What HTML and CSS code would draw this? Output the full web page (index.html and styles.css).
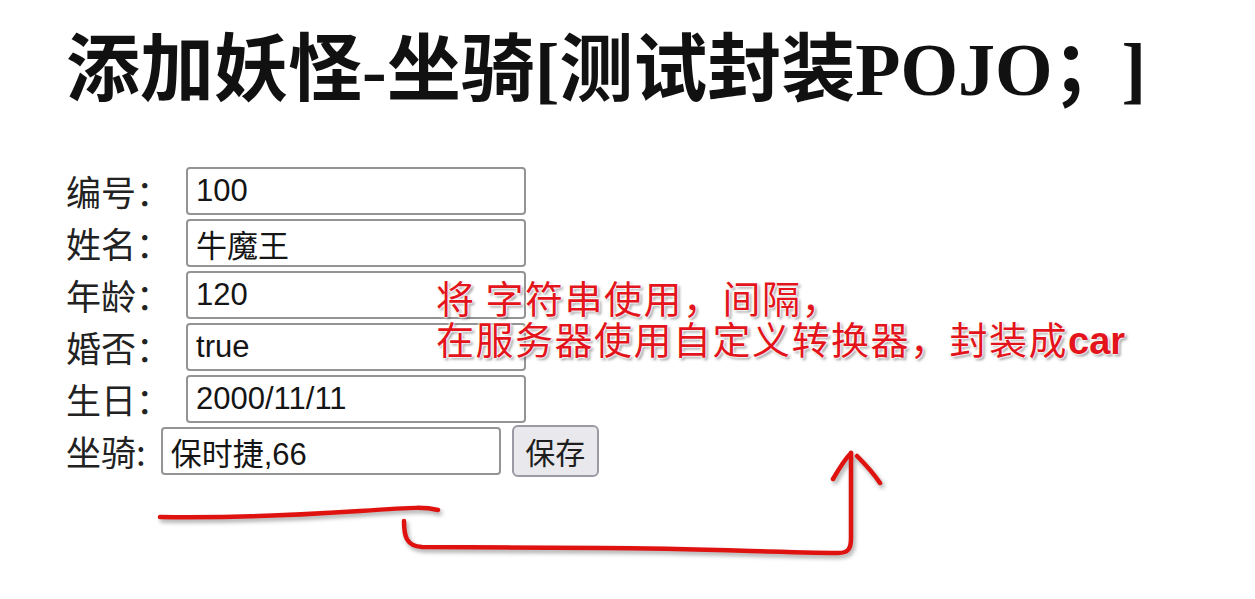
FILE: index.html
```html
<!DOCTYPE html>
<html lang="zh-CN">
<head>
<meta charset="utf-8">
<title>添加妖怪-坐骑</title>
<link rel="stylesheet" href="styles.css">
</head>
<body>
<div class="page">
  <h1 class="title">添加妖怪-坐骑[测试封装POJO；<span class="close">]</span></h1>
  <form class="form">
    <div class="row"><label class="lbl">编号：</label><input class="field" type="text" value="100"></div>
    <div class="row"><label class="lbl">姓名：</label><input class="field" type="text" value="牛魔王"></div>
    <div class="row"><label class="lbl">年龄：</label><input class="field" type="text" value="120"></div>
    <div class="row"><label class="lbl">婚否：</label><input class="field" type="text" value="true"></div>
    <div class="row"><label class="lbl">生日：</label><input class="field" type="text" value="2000/11/11"></div>
    <div class="row"><label class="lbl">坐骑:</label><input class="field" type="text" value="保时捷,66"><button class="btn" type="button">保存</button></div>
  </form>
  <div class="note">将 字符串使用，间隔，<br>在服务器使用自定义转换器，封装成<b class="car">car</b></div>
  <svg class="marks" width="1255" height="599" viewBox="0 0 1255 599" xmlns="http://www.w3.org/2000/svg">
    <g fill="none" stroke="#e0120f" stroke-width="4.5" stroke-linecap="round" stroke-linejoin="round">
      <path d="M160 517 C 230 518, 300 515, 360 511 S 425 507, 438 510"/>
      <path d="M404 521 C 404 536, 406 546, 422 547 L 600 548 C 700 548, 780 553, 838 553 C 849 553, 851 548, 851 538 L 851 453"/>
      <path d="M833 479 C 840 467, 845 459, 851 453"/>
      <path d="M857 456 C 866 465, 874 474, 880 483"/>
    </g>
  </svg>
</div>
</body>
</html>
```
FILE: styles.css
```css
html, body {
  margin: 0;
  padding: 0;
  background: #ffffff;
}

.page {
  position: relative;
  width: 1255px;
  height: 599px;
  box-sizing: border-box;
  padding: 30px 0 0 66px;
  overflow: hidden;
  font-family: "Noto Sans CJK SC", "Noto Sans", sans-serif;
  color: #1e1e1e;
}

.title {
  margin: 0 0 55px 0;
  font-family: "Liberation Serif", "Noto Sans CJK SC", serif;
  font-weight: bold;
  font-size: 74px;
  line-height: 80px;
  color: #111111;
  white-space: nowrap;
}

.close {
  margin-left: 32px;
}

.form {
  display: flex;
  flex-direction: column;
  margin: 0;
}

.row {
  display: flex;
  align-items: center;
  height: 52px;
}

.lbl {
  font-family: "Noto Sans CJK SC", sans-serif;
  font-size: 35px;
  line-height: 40px;
  color: #222222;
}

.field {
  box-sizing: border-box;
  width: 340px;
  height: 48px;
  margin: 0 0 0 15px;
  padding: 0 8px;
  border: 2px solid #949494;
  border-radius: 4px;
  background: #ffffff;
  font-family: "Liberation Sans", "Noto Sans CJK SC", sans-serif;
  font-size: 31px;
  color: #151515;
  outline: none;
}

.btn {
  box-sizing: border-box;
  width: 87px;
  height: 52px;
  margin-left: 11px;
  padding: 0;
  border: 2px solid #9a9aa4;
  border-radius: 6px;
  background: #e9e9ed;
  font-family: "Noto Sans CJK SC", sans-serif;
  font-size: 30px;
  color: #1e1e1e;
}

.note {
  position: absolute;
  left: 436px;
  top: 276px;
  font-family: "Noto Sans CJK SC", sans-serif;
  font-size: 38px;
  line-height: 41px;
  letter-spacing: 1.5px;
  color: #e3141b;
  white-space: nowrap;
  text-shadow:
    0 0 2px #ffffff, 0 0 2px #ffffff, 0 0 3px #ffffff, 0 0 3px #ffffff,
    2px 2px 3px rgba(0, 0, 0, 0.5);
}

.car {
  font-family: "Liberation Sans", sans-serif;
  font-weight: bold;
  letter-spacing: 0;
}

.marks {
  position: absolute;
  left: 0;
  top: 0;
  pointer-events: none;
  filter: drop-shadow(2px 3px 2px rgba(0, 0, 0, 0.35));
}
```
